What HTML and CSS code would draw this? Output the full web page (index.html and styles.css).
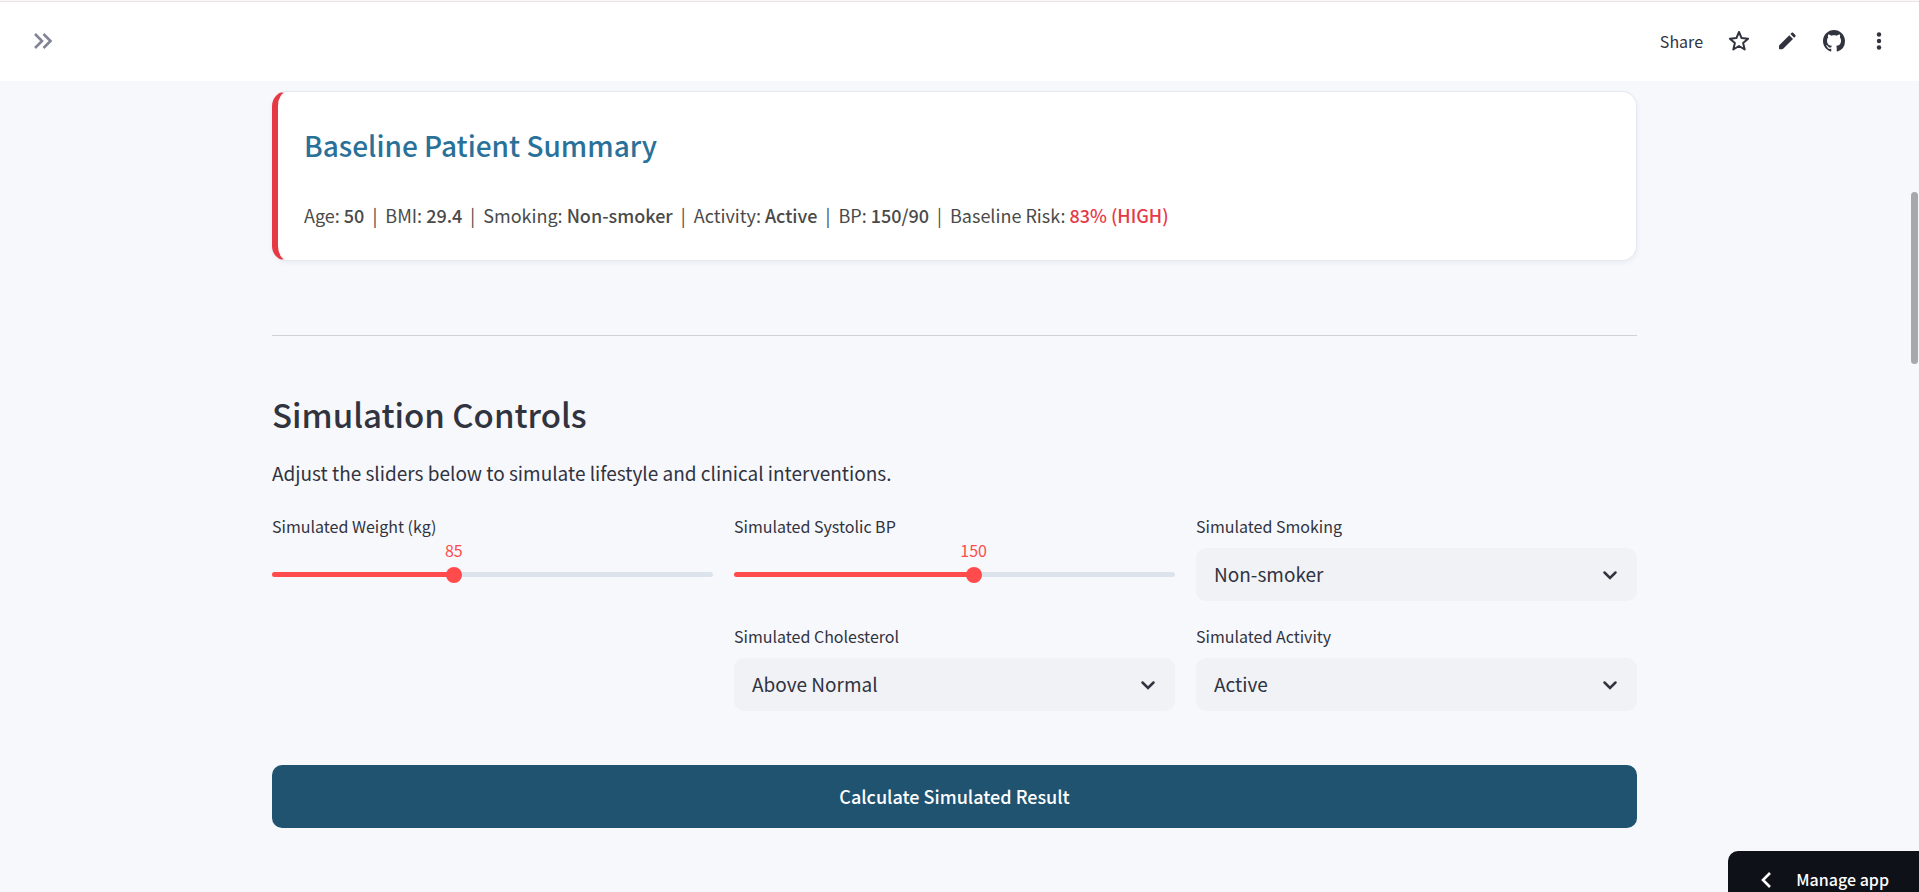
FILE: index.html
```html
<!DOCTYPE html>
<html lang="en">
<head>
  <meta charset="UTF-8">
  <meta name="viewport" content="width=device-width, initial-scale=1.0">
  <title>Simulation Controls</title>
  <link rel="stylesheet" href="styles.css">
</head>
<body>
  <header class="toolbar">
    <button class="icon-btn expand" aria-label="Open sidebar">
      <svg width="20" height="20" viewBox="0 0 20 20" fill="none" stroke="currentColor" stroke-width="2.600"><path d="M2 3l7 7-7 7M10.500 3l7 7-7 7"/></svg>
    </button>
    <nav class="toolbar-actions">
      <button class="share">Share</button>
      <button class="icon-btn" aria-label="Favorite">
        <svg width="24" height="24" viewBox="0 0 24 24" fill="none" stroke="currentColor" stroke-width="2" stroke-linejoin="round"><path d="M12 3l2.600 6.100 6.500.6-5 4.300 1.600 6.500-5.700-3.500-5.700 3.500L7.900 14l-5-4.300 6.500-.6z"/></svg>
      </button>
      <button class="icon-btn" aria-label="Edit">
        <svg width="24" height="24" viewBox="0 0 24 24" fill="currentColor"><path d="M4 17.200c0-.5.2-.9.500-1.200L14.300 6.200l3.700 3.700L8.200 19.700c-.3.300-.7.500-1.200.500H4.700c-.4 0-.7-.3-.7-.7zM15.400 5.100l1.300-1.300c.4-.4 1-.4 1.400 0l2.300 2.300c.4.400.4 1 0 1.400l-1.300 1.300z"/></svg>
      </button>
      <button class="icon-btn" aria-label="View on GitHub">
        <svg width="22" height="22" viewBox="0 0 16 16" fill="currentColor"><path d="M8 0C3.580 0 0 3.580 0 8c0 3.540 2.290 6.530 5.470 7.590.4.070.55-.17.55-.38 0-.19-.01-.82-.01-1.490-2.010.37-2.530-.49-2.690-.94-.09-.23-.48-.94-.82-1.130-.28-.15-.68-.52-.01-.53.63-.01 1.080.58 1.230.82.720 1.210 1.870.87 2.330.66.070-.52.280-.87.510-1.070-1.780-.2-3.640-.89-3.640-3.950 0-.87.310-1.590.82-2.150-.08-.2-.36-1.020.08-2.120 0 0 .67-.21 2.200.82.640-.18 1.320-.27 2-.27s1.360.09 2 .27c1.530-1.040 2.200-.82 2.200-.82.440 1.100.16 1.920.08 2.120.51.560.82 1.270.82 2.150 0 3.070-1.870 3.750-3.650 3.950.29.250.54.730.54 1.480 0 1.070-.01 1.930-.01 2.200 0 .21.150.46.550.38A8.010 8.010 0 0 0 16 8c0-4.420-3.580-8-8-8z"/></svg>
      </button>
      <button class="icon-btn" aria-label="Main menu">
        <svg width="20" height="24" viewBox="0 0 20 24" fill="currentColor"><circle cx="10" cy="5.500" r="2.200"/><circle cx="10" cy="12" r="2.200"/><circle cx="10" cy="18.500" r="2.200"/></svg>
      </button>
    </nav>
  </header>

  <main class="container">
    <section class="card">
      <h3>Baseline Patient Summary</h3>
      <p>Age: <b>50</b> &nbsp;|&nbsp; BMI: <b>29.4</b> &nbsp;|&nbsp; Smoking: <b>Non-smoker</b> &nbsp;|&nbsp; Activity: <b>Active</b> &nbsp;|&nbsp; BP: <b>150/90</b> &nbsp;|&nbsp; Baseline Risk: <b class="high">83% (HIGH)</b></p>
    </section>

    <hr>

    <h2>Simulation Controls</h2>
    <p class="intro">Adjust the sliders below to simulate lifestyle and clinical interventions.</p>

    <div class="controls">
      <div class="column">
        <div class="field">
          <label for="weight">Simulated Weight (kg)</label>
          <div class="slider" style="--pos: 0.409">
            <output for="weight">85</output>
            <input type="range" id="weight" min="40" max="150" value="85">
          </div>
        </div>
      </div>
      <div class="column">
        <div class="field">
          <label for="systolic">Simulated Systolic BP</label>
          <div class="slider" style="--pos: 0.545">
            <output for="systolic">150</output>
            <input type="range" id="systolic" min="90" max="200" value="150">
          </div>
        </div>
        <div class="field">
          <label for="cholesterol">Simulated Cholesterol</label>
          <div class="select">
            <select id="cholesterol">
              <option>Normal</option>
              <option selected>Above Normal</option>
              <option>Well Above Normal</option>
            </select>
            <svg width="16" height="16" viewBox="0 0 16 16"><path d="M2.500 5.500L8 11l5.500-5.500"/></svg>
          </div>
        </div>
      </div>
      <div class="column">
        <div class="field">
          <label for="smoking">Simulated Smoking</label>
          <div class="select">
            <select id="smoking">
              <option selected>Non-smoker</option>
              <option>Smoker</option>
            </select>
            <svg width="16" height="16" viewBox="0 0 16 16"><path d="M2.500 5.500L8 11l5.500-5.500"/></svg>
          </div>
        </div>
        <div class="field">
          <label for="activity">Simulated Activity</label>
          <div class="select">
            <select id="activity">
              <option selected>Active</option>
              <option>Inactive</option>
            </select>
            <svg width="16" height="16" viewBox="0 0 16 16"><path d="M2.500 5.500L8 11l5.500-5.500"/></svg>
          </div>
        </div>
      </div>
    </div>

    <button class="calculate">Calculate Simulated Result</button>
  </main>

  <div class="scroll-thumb"></div>
  <button class="manage">
    <svg width="12" height="18" viewBox="0 0 12 18" fill="none" stroke="currentColor" stroke-width="2.600"><path d="M10 2L3 9l7 7"/></svg>
    Manage app
  </button>
</body>
</html>
```
FILE: styles.css
```css
:root {
  --primary-color: #ff4b4b;
  --heading-blue: #2a7199;
  --button-blue: #1f5370;
  --danger-color: #e63946;
  --background-color: #f6f8fc;
  --input-background: #f0f2f6;
  --track-color: #dde3ed;
  --text-color: #31333f;
}

* {
  box-sizing: border-box;
}

body {
  margin: 0;
  min-height: 100vh;
  background-color: var(--background-color);
  color: var(--text-color);
  font-family: "Noto Sans CJK SC", "Open Sans", sans-serif;
  font-size: 19px;
}

button, select {
  font: inherit;
  color: inherit;
  border: none;
  cursor: pointer;
}

.toolbar {
  display: flex;
  align-items: center;
  justify-content: space-between;
  height: 80px;
  margin-top: 1px;
  padding: 0 30px 2px 33px;
  background-color: #fff;
  border-top: 1px solid #ebe3e6;
}

.toolbar-actions {
  display: flex;
  align-items: center;
  gap: 24px;
}

.toolbar button {
  padding: 0;
  background: none;
}

.toolbar .icon-btn {
  display: flex;
}

.toolbar .expand {
  color: #808495;
}

.toolbar .share {
  font-size: 16px;
}

.container {
  display: flex;
  flex-direction: column;
  width: calc(100% - 10px);
  max-width: 1365px;
  /* keeps the column clear of the scrollbar */
  margin-left: max(0px, calc((100% - 1375px) / 2));
  padding-top: 10px;
}

.card {
  background-color: #fff;
  border: 1px solid #e4e8f0;
  border-left: 6px solid var(--danger-color);
  border-radius: 15px;
  box-shadow: 0 2px 5px rgba(30, 50, 90, 0.06);
  padding: 31px 26px 30px;
}

.card h3 {
  margin: 0 0 33px;
  color: var(--heading-blue);
  font-size: 28px;
  font-weight: 500;
  line-height: 44px;
}

.card p {
  margin: 0;
  color: #4a4a4a;
  font-size: 18px;
  line-height: 30px;
}

b {
  font-weight: 500;
}

.high {
  color: var(--danger-color);
}

hr {
  width: 100%;
  height: 1px;
  margin: 74px 0 54px;
  border: none;
  background-color: #ced1d8;
}

h2 {
  margin: 0 0 20px;
  font-size: 33px;
  font-weight: 500;
  line-height: 48px;
}

.intro {
  margin: 0 0 26px;
  line-height: 30px;
}

.controls {
  display: grid;
  grid-template-columns: repeat(3, 1fr);
  gap: 21px;
}

.column {
  display: flex;
  flex-direction: column;
  gap: 23px;
}

.field {
  display: flex;
  flex-direction: column;
  gap: 9px;
}

label {
  font-size: 16px;
  line-height: 25px;
}

.slider {
  position: relative;
  display: flex;
  align-items: center;
  height: 53px;
}

/* value floats above the thumb */
.slider output {
  position: absolute;
  top: -10px;
  left: calc(8px + (100% - 16px) * var(--pos));
  transform: translateX(-50%);
  color: var(--primary-color);
  font-size: 16px;
  line-height: 25px;
}

.slider input {
  -webkit-appearance: none;
  appearance: none;
  width: 100%;
  height: 5px;
  margin: 0;
  border-radius: 3px;
  background: linear-gradient(to right, var(--primary-color) calc(8px + (100% - 16px) * var(--pos)), var(--track-color) 0);
}

.slider input::-webkit-slider-thumb {
  -webkit-appearance: none;
  width: 16px;
  height: 16px;
  border-radius: 50%;
  background-color: var(--primary-color);
}

.select {
  display: grid;
  align-items: center;
}

.select select,
.select svg {
  grid-area: 1 / 1;
}

.select select {
  -webkit-appearance: none;
  appearance: none;
  width: 100%;
  height: 53px;
  padding: 0 48px 2px 18px;
  border-radius: 10px;
  background-color: var(--input-background);
}

.select svg {
  justify-self: end;
  margin-right: 19px;
  fill: none;
  stroke: var(--text-color);
  stroke-width: 2.5;
  stroke-linecap: round;
  pointer-events: none;
}

.calculate {
  height: 63px;
  margin: 54px 0 0;
  padding-bottom: 3px;
  border-radius: 10px;
  background-color: var(--button-blue);
  color: #fff;
  font-size: 18px;
  font-weight: 500;
}

.scroll-thumb {
  position: fixed;
  top: 192px;
  right: 1px;
  width: 7px;
  height: 172px;
  border-radius: 4px;
  background-color: #a7a8ae;
}

.manage {
  position: fixed;
  right: 0;
  bottom: 0;
  display: flex;
  align-items: center;
  gap: 24px;
  padding: 16px 30px 0 32px;
  border-radius: 10px 0 0 0;
  background-color: #0e1117;
  color: #fff;
  font-size: 16px;
  font-weight: 500;
  line-height: 25px;
}
```
